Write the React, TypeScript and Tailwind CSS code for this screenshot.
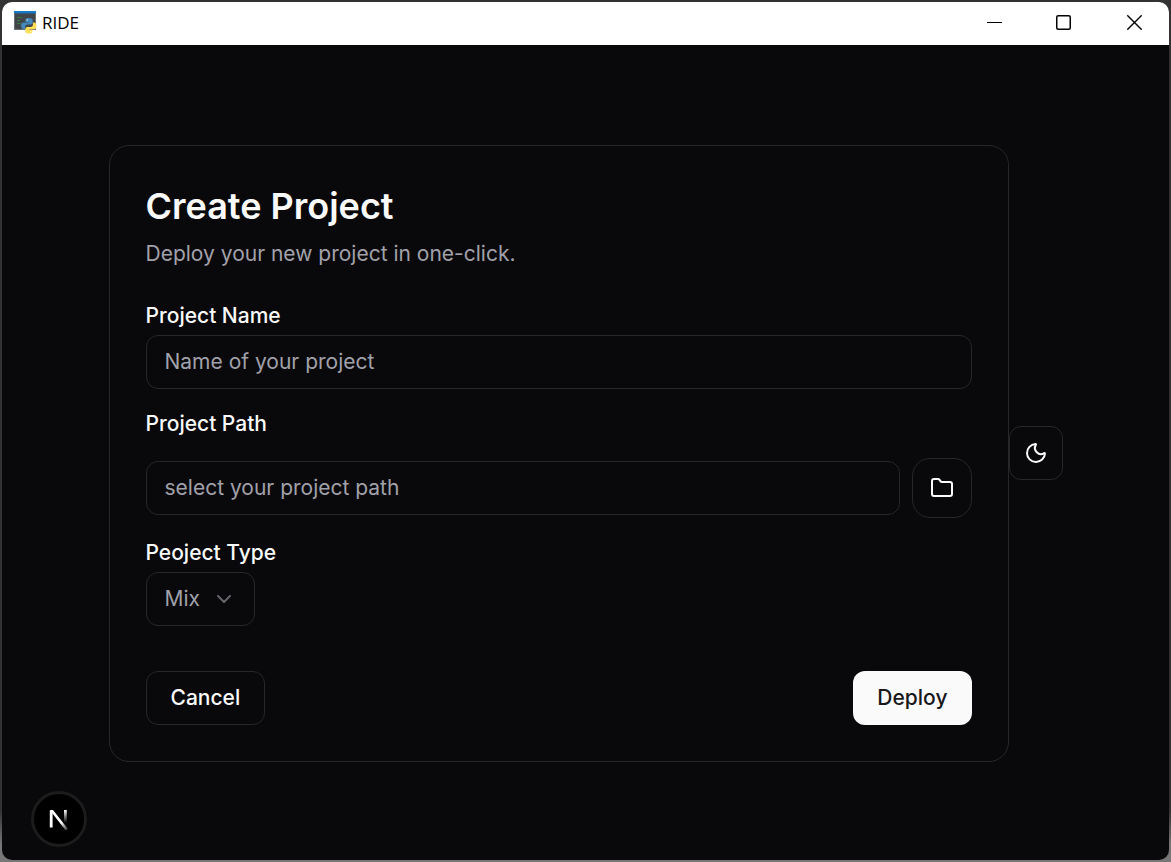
import { ChevronDown, Folder, Moon } from "lucide-react";

function PythonConsoleIcon() {
  return (
    <svg width="23" height="24" viewBox="0 0 23 24" aria-hidden="true">
      <rect x="0.5" y="0.5" width="21" height="18" fill="#3f4548" stroke="#6b7073" />
      <rect x="0" y="0" width="22" height="2.4" fill="#1778c8" />
      <path d="M3 6.500h5M3 9.500h3M3 12.500h4" stroke="#357a40" strokeWidth="1" />
      <path
        d="M14.600 7c-2.600 0-3.200 1-3.200 2.200v1.700h3.400v.6H9.800c-1.700 0-2.700 1.200-2.700 3.200 0 2 1 3.300 2.500 3.300h1.500v-2.100c0-1.400 1.100-2.400 2.400-2.400h3.200c1.100 0 2-.9 2-2V9.200C18.700 7.700 17 7 14.600 7z"
        fill="#4489bd"
      />
      <path
        d="M15.200 22.600c2.600 0 3.200-1 3.200-2.200v-1.600H15v-.6h4.900c1.700 0 2.600-1.300 2.600-3.300 0-2-.9-3.300-2.400-3.300h-1.200v2.200c0 1.300-1 2.300-2.300 2.300h-3.200c-1.200 0-2 .9-2 2v2.300c0 1.500 1.600 2.200 3.800 2.200z"
        fill="#ffdf57"
      />
      <circle cx="13.200" cy="8.900" r="0.6" fill="#fff" />
      <circle cx="16.700" cy="20.700" r="0.6" fill="#fff" />
    </svg>
  );
}

function TitleBar() {
  return (
    <header className="flex h-[43px] shrink-0 items-center bg-white pb-0.5 pl-3 text-black">
      <PythonConsoleIcon />
      <span className="ml-[5px] flex-1 font-['Open_Sans',sans-serif] text-[17px] leading-6">RIDE</span>
      <div className="flex h-full">
        <button type="button" aria-label="Minimize" className="flex w-[70px] items-center justify-center">
          <svg width="15" height="15" viewBox="0 0 15 15" stroke="currentColor">
            <path d="M0 7.500h15" />
          </svg>
        </button>
        <button type="button" aria-label="Maximize" className="flex w-[70px] items-center justify-center">
          <svg width="16" height="15" viewBox="0 0 16 15" fill="none" stroke="currentColor" strokeWidth="1.500">
            <rect x="0.750" y="0.750" width="13.500" height="13.500" rx="1.500" />
          </svg>
        </button>
        <button type="button" aria-label="Close" className="flex w-[70px] items-center justify-center">
          <svg width="15" height="15" viewBox="0 0 15 15" stroke="currentColor" strokeWidth="1.400">
            <path d="M0.300 0.300l14.400 14.400M14.700 0.300L0.300 14.700" />
          </svg>
        </button>
      </div>
    </header>
  );
}

function NextBadge() {
  return (
    <button
      type="button"
      aria-label="Open developer tools"
      className="absolute bottom-[13px] left-[29px] flex size-14 items-center justify-center rounded-full border-[3px] border-[#1c1c1c] bg-black"
    >
      <svg width="24" height="24" viewBox="0 0 24 24" fill="none">
        <defs>
          <linearGradient id="stem" x1="0" y1="3" x2="0" y2="16" gradientUnits="userSpaceOnUse">
            <stop stopColor="#fff" />
            <stop offset="1" stopColor="#fff" stopOpacity="0" />
          </linearGradient>
          <linearGradient id="diagonal" x1="14" y1="16" x2="21" y2="25" gradientUnits="userSpaceOnUse">
            <stop stopColor="#fff" />
            <stop offset="1" stopColor="#fff" stopOpacity="0" />
          </linearGradient>
        </defs>
        <path d="M4.200 20.500V3.500" stroke="#fff" strokeWidth="2.800" />
        <path d="M2.800 3H6L21 22L18.700 23.600L2.800 3z" fill="url(#diagonal)" />
        <path d="M18.400 3v13" stroke="url(#stem)" strokeWidth="2.800" />
      </svg>
    </button>
  );
}

const field =
  "h-[54px] w-full min-w-0 rounded-xl border border-[#27272a] bg-transparent px-[18px] text-[21px] text-[#fafafa] outline-none placeholder:text-[#a1a1aa]";
const label = "block text-[21px] leading-[21px] font-medium";

export default function App() {
  return (
    <div className="flex min-h-screen flex-col bg-linear-to-b from-[#333333] from-94% to-[#777777] to-98% p-0.5 font-['Inter',sans-serif] text-[#fafafa]">
      <div className="relative flex flex-1 flex-col overflow-hidden rounded-[10px] bg-[#09090b]">
        <TitleBar />
        <main className="flex flex-1 items-center justify-center px-6 pt-[25px] pb-6">
          <form
            className="w-full max-w-[900px] min-w-0 rounded-[20px] border border-[#27272a] p-9"
            onSubmit={(event) => event.preventDefault()}
          >
            <h1 className="text-4xl leading-12 font-semibold">Create Project</h1>
            <p className="mt-2 text-[21px] leading-8 text-[#a1a1aa]">Deploy your new project in one-click.</p>
            <div className="mt-[35px] flex flex-col gap-6">
              <div className="flex flex-col gap-[9px]">
                <label htmlFor="name" className={label}>Project Name</label>
                <input id="name" className={field} placeholder="Name of your project" />
              </div>
              <div className="flex flex-col gap-6">
                <label htmlFor="path" className={label}>Project Path</label>
                <div className="flex items-center gap-3">
                  <input id="path" className={field} placeholder="select your project path" />
                  <button
                    type="button"
                    aria-label="Browse for a folder"
                    className="flex size-[60px] shrink-0 items-center justify-center rounded-[18px] border border-[#27272a]"
                  >
                    <Folder size={24} />
                  </button>
                </div>
              </div>
              <div className="flex flex-col items-start gap-[9px]">
                <label htmlFor="type" className={label}>Peoject Type</label>
                <div className="relative">
                  <select
                    id="type"
                    className="h-[54px] w-[109px] appearance-none rounded-xl border border-[#27272a] bg-[#09090b] pl-[18px] text-[21px] text-[#a1a1aa] outline-none"
                  >
                    <option>Mix</option>
                  </select>
                  <ChevronDown size={24} className="pointer-events-none absolute top-[15px] right-[19px] text-[#a1a1aa] opacity-60" />
                </div>
              </div>
            </div>
            <div className="mt-[45px] flex justify-between">
              <button type="button" className="h-[54px] rounded-xl border border-[#27272a] px-6 text-[21px] font-medium">
                Cancel
              </button>
              <button type="submit" className="h-[54px] rounded-xl bg-[#fafafa] px-6 text-[21px] font-medium text-[#18181b]">
                Deploy
              </button>
            </div>
          </form>
          <button
            type="button"
            aria-label="Toggle theme"
            className="flex size-[54px] shrink-0 items-center justify-center rounded-xl border border-[#27272a]"
          >
            <Moon size={24} />
          </button>
        </main>
        <NextBadge />
      </div>
    </div>
  );
}
